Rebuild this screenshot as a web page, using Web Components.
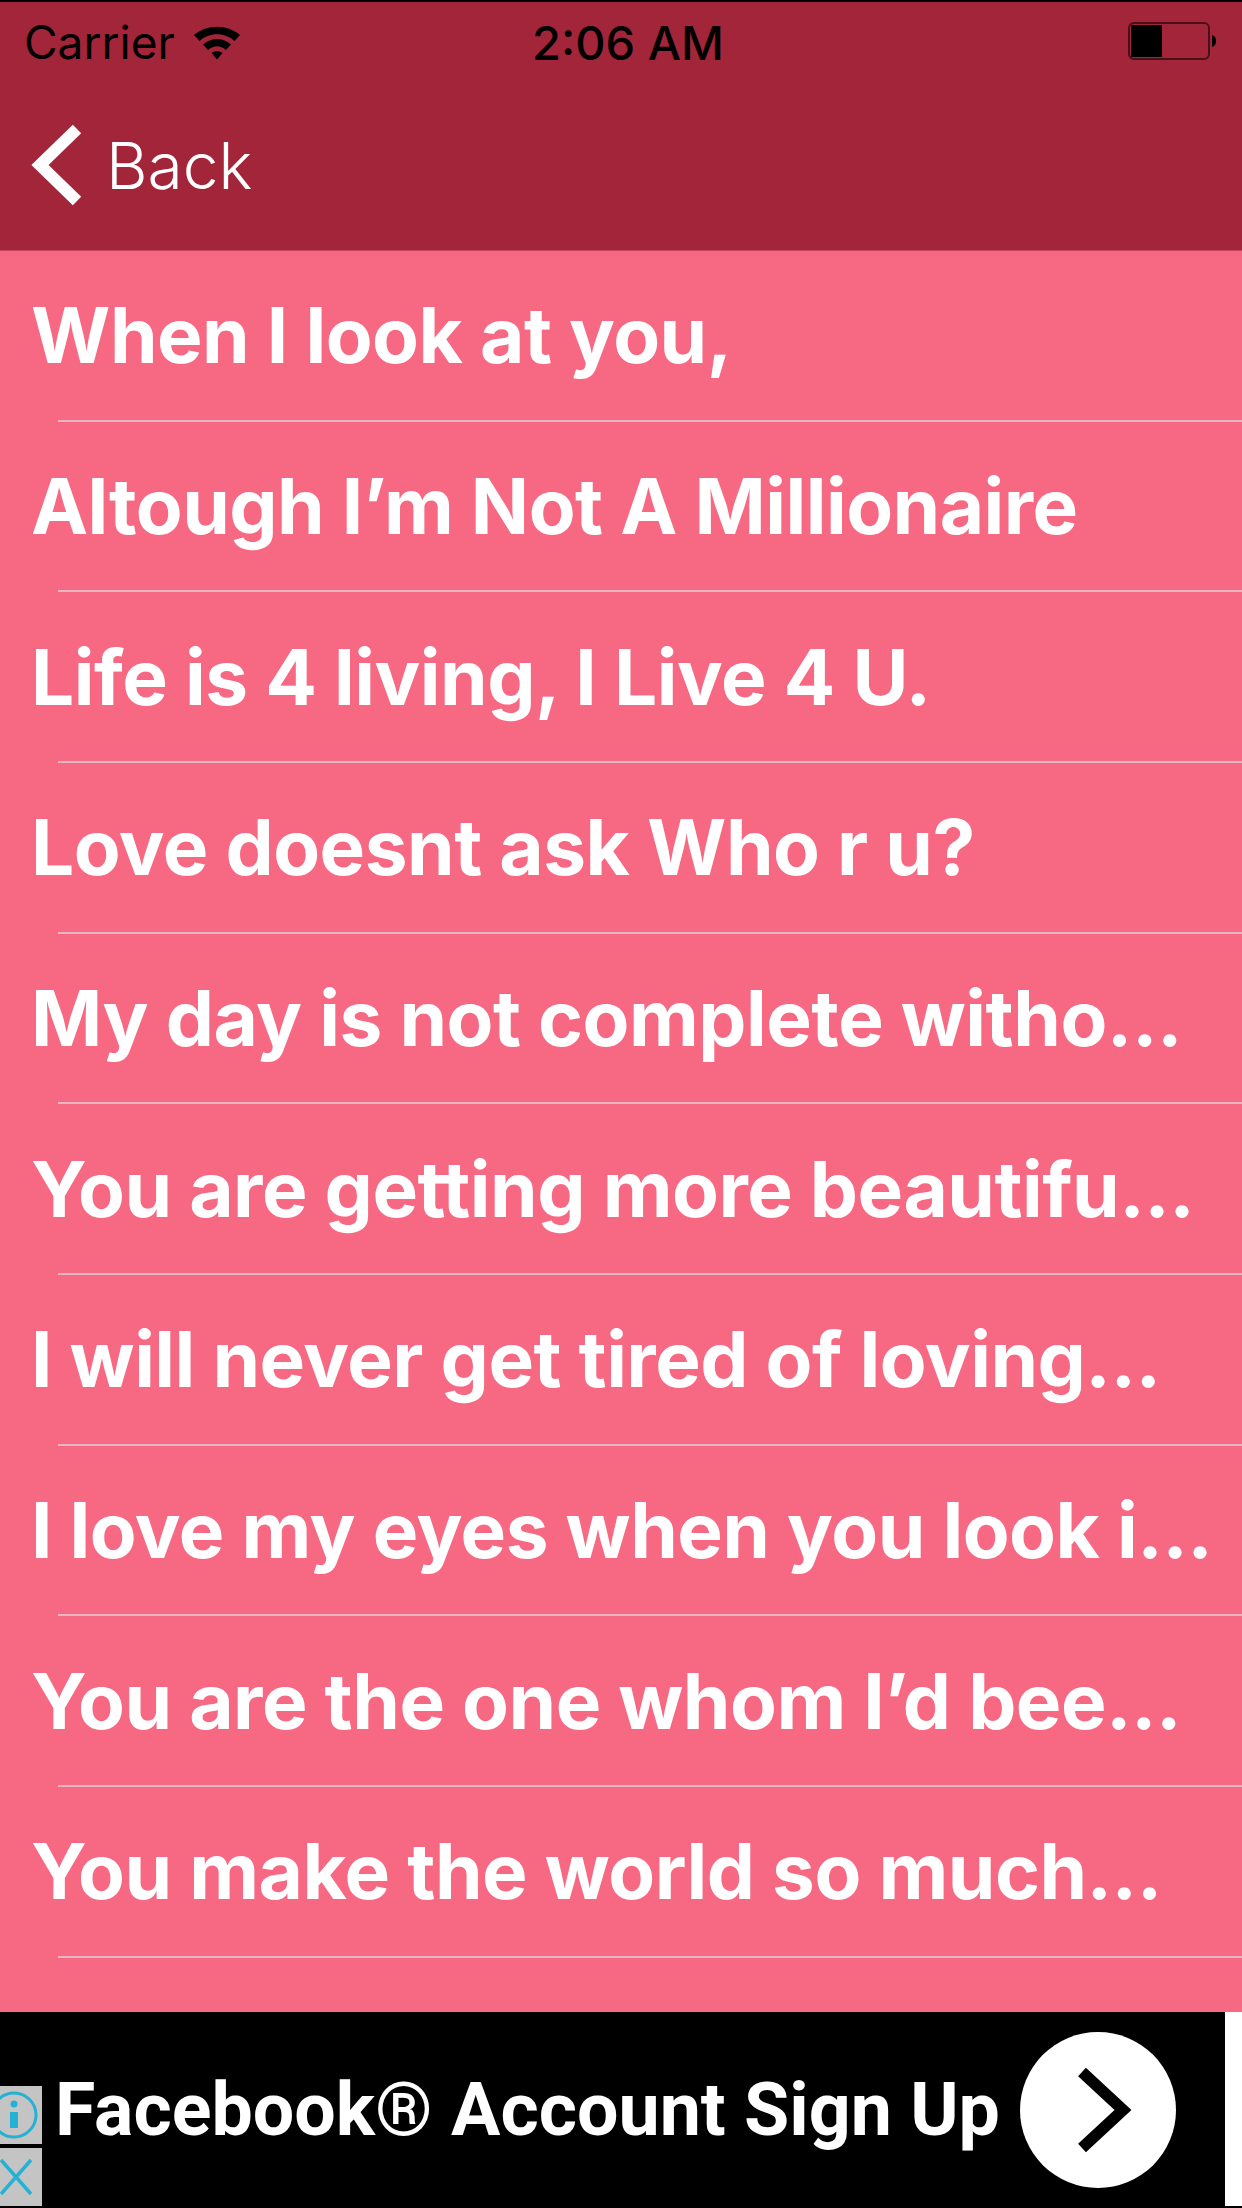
<!DOCTYPE html>
<html>
<head>
<meta charset="utf-8">
<title>Quotes</title>
<style>
html, body { margin: 0; padding: 0; }
body { width: 1242px; height: 2208px; overflow: hidden; background: #f76983; }
#app { display: flex; flex-direction: column; height: 2208px; }
</style>
</head>
<body>
<div id="app">
  <app-header>Back</app-header>
  <quote-list>
    <quote-row>When I look at you,</quote-row>
    <quote-row>Altough I’m Not A Millionaire</quote-row>
    <quote-row>Life is 4 living, I Live 4 U.</quote-row>
    <quote-row>Love doesnt ask Who r u?</quote-row>
    <quote-row>My day is not complete witho...</quote-row>
    <quote-row>You are getting more beautifu...</quote-row>
    <quote-row>I will never get tired of loving...</quote-row>
    <quote-row>I love my eyes when you look i...</quote-row>
    <quote-row>You are the one whom I’d bee...</quote-row>
    <quote-row>You make the world so much...</quote-row>
  </quote-list>
  <ad-banner>Facebook® Account Sign Up</ad-banner>
</div>

<script>
const headerTemplate = document.createElement('template');
headerTemplate.innerHTML = `
  <style>
:host {
    display: block;
    height: 251px;
    box-sizing: border-box;
    background: #a3253a;
    border-top: 2px solid #000;
    border-bottom: 1px solid #c4475f;
    font-family: Inter, "Liberation Sans", sans-serif;
}
.status {
    display: grid;
    grid-template-columns: 1fr auto 1fr;
    align-items: center;
    height: 80px;
    color: #000;
    font-size: 46px;
}
.left { display: flex; align-items: center; padding-left: 24px; gap: 18px; }
.time { font-weight: 500; font-size: 47px; margin-left: 14px; }
.right { display: flex; justify-content: flex-end; padding-right: 26px; }
.nav { display: flex; align-items: center; height: 84px; padding-left: 30px; margin-top: 41px; color: #fff; font-size: 64px; font-weight: 300; gap: 24px; }
svg { display: block; }
  </style>
  <div class="status">
    <div class="left"><span>Carrier</span>
      <svg width="48" height="36" viewBox="0 0 48 36">
        <path d="M1 11 C14 0 34 0 47 11 L41.500 17 C32 8 16 8 6.500 17 Z" fill="#000"/>
        <path d="M10 20.500 C18 13 30 13 38 20.500 L33 26 C27 21 21 21 15 26 Z" fill="#000"/>
        <path d="M18.500 29 C21.500 26.500 26.500 26.500 29.500 29 L24 35.500 Z" fill="#000"/>
      </svg>
    </div>
    <div class="time">2:06 AM</div>
    <div class="right">
      <svg width="88" height="40" viewBox="0 0 88 40">
        <rect x="1" y="1" width="80" height="36" rx="5" fill="none" stroke="#4a0f18" stroke-width="2"/>
        <rect x="3" y="3" width="31" height="32" fill="#000"/>
        <path d="M84 13 C87 14 88 16 88 19 C88 22 87 24 84 25 Z" fill="#000"/>
      </svg>
    </div>
  </div>
  <div class="nav">
    <svg width="52" height="84" viewBox="0 0 52 84"><path d="M47 6 L10 42 L47 78" fill="none" stroke="#fff" stroke-width="12"/></svg>
    <span><slot></slot></span>
  </div>
`;

class AppHeader extends HTMLElement {
    constructor() {
        super();
        this.attachShadow({ mode: 'open' });
        this.shadowRoot.appendChild(headerTemplate.content.cloneNode(true));
    }
}

const listTemplate = document.createElement('template');
listTemplate.innerHTML = `
  <style>
:host { display: block; flex: 1; background: #f76983; overflow: hidden; }
  </style>
  <slot></slot>
`;

class QuoteList extends HTMLElement {
    constructor() {
        super();
        this.attachShadow({ mode: 'open' });
        this.shadowRoot.appendChild(listTemplate.content.cloneNode(true));
    }
}

const rowTemplate = document.createElement('template');
rowTemplate.innerHTML = `
  <style>
:host {
    display: flex;
    align-items: center;
    position: relative;
    height: 170.67px;
    box-sizing: border-box;
    padding: 0 31px 2px;
    color: #fff;
    font-family: Inter, "Liberation Sans", sans-serif;
    font-size: 76.500px;
    font-weight: 700;
    letter-spacing: -0.5px;
    white-space: nowrap;
}
.line { position: absolute; left: 58px; right: 0; bottom: 0; height: 2px; background: #e3b6c0; }
  </style>
  <slot></slot>
  <div class="line"></div>
`;

class QuoteRow extends HTMLElement {
    constructor() {
        super();
        this.attachShadow({ mode: 'open' });
        this.shadowRoot.appendChild(rowTemplate.content.cloneNode(true));
    }
}

const adTemplate = document.createElement('template');
adTemplate.innerHTML = `
  <style>
:host {
    display: flex;
    align-items: flex-start;
    height: 196px;
    background: #000;
    font-family: Roboto, "Liberation Sans", sans-serif;
}
.creative {
    flex: none;
    width: 1225px;
    height: 194px;
    display: flex;
    align-items: center;
    position: relative;
}
.edge { flex: 1; height: 194px; background: #fff; }
.text { margin-left: 55px; margin-top: 2px; color: #fff; font-size: 73.500px; font-weight: 700; white-space: nowrap; }
.go { position: absolute; left: 1020px; top: 20px; }
.badges { position: absolute; left: 0; bottom: 0; display: flex; flex-direction: column; gap: 4px; }
.badge { width: 42px; height: 58px; background: #c4c4c4; overflow: hidden; }
svg { display: block; }
  </style>
  <div class="creative">
    <div class="text"><slot></slot></div>
    <svg class="go" width="156" height="156" viewBox="0 0 156 156">
      <circle cx="78" cy="78" r="78" fill="#fff"/>
      <path d="M62 40 L103 78 L62 116" fill="none" stroke="#000" stroke-width="11.500"/>
    </svg>
    <div class="badges">
      <div class="badge">
        <svg width="42" height="58" viewBox="0 0 42 58">
          <circle cx="14" cy="29" r="22" fill="none" stroke="#25b1d3" stroke-width="3"/>
          <circle cx="14" cy="18" r="3.500" fill="#25b1d3"/>
          <rect x="10" y="26" width="8" height="16" fill="#25b1d3"/>
        </svg>
      </div>
      <div class="badge">
        <svg width="42" height="58" viewBox="0 0 42 58">
          <path d="M1 12 L31 46 M31 12 L1 46" fill="none" stroke="#25b1d3" stroke-width="3.500"/>
        </svg>
      </div>
    </div>
  </div>
  <div class="edge"></div>
`;

class AdBanner extends HTMLElement {
    constructor() {
        super();
        this.attachShadow({ mode: 'open' });
        this.shadowRoot.appendChild(adTemplate.content.cloneNode(true));
    }
}

customElements.define('app-header', AppHeader);
customElements.define('quote-list', QuoteList);
customElements.define('quote-row', QuoteRow);
customElements.define('ad-banner', AdBanner);
</script>
</body>
</html>
